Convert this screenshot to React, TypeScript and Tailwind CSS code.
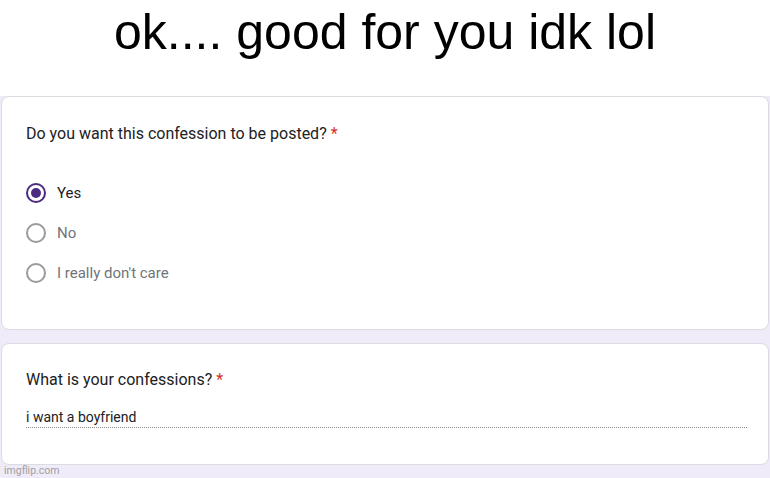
import React from "react";

function Radio({ checked }: { checked?: boolean }) {
  return checked ? (
    <span className="flex h-[20px] w-[20px] items-center justify-center rounded-full border-2 border-[#4b2a80]">
      <span className="h-[10px] w-[10px] rounded-full bg-[#4b2a80]" />
    </span>
  ) : (
    <span className="h-[20px] w-[20px] rounded-full border-2 border-[#9a9a9a]" />
  );
}

export default function App() {
  const opts = [
    { label: "Yes", checked: true },
    { label: "No" },
    { label: "I really don't care" },
  ];
  return (
    <div className="flex h-[478px] w-[770px] flex-col overflow-hidden bg-[#f0ebf8]" style={{ fontFamily: "Roboto, 'Liberation Sans', sans-serif" }}>
      <div className="flex h-[96px] shrink-0 items-start justify-center bg-white pt-[3px]">
        <div className="text-[50px] leading-[58px] text-black" style={{ fontFamily: "'Liberation Sans', Arial, sans-serif" }}>
          ok.... good for you idk lol
        </div>
      </div>
      <div className="mx-[1px] h-[234px] shrink-0 rounded-[8px] border border-[#dadce0] bg-white px-[24px] pt-[27px]">
        <div className="text-[16px] leading-[20px] text-[#202124]">
          Do you want this confession to be posted? <span className="text-[#d93025]">*</span>
        </div>
        <div className="mt-[39px] flex flex-col gap-[20px]">
          {opts.map((o) => (
            <div key={o.label} className="flex h-[20px] items-center gap-[11px]">
              <Radio checked={o.checked} />
              <span className={"text-[15px] leading-[20px] " + (o.checked ? "text-[#202124]" : "text-[#70757a]")}>{o.label}</span>
            </div>
          ))}
        </div>
      </div>
      <div className="mx-[1px] mt-[13px] h-[122px] shrink-0 rounded-[8px] border border-[#dadce0] bg-white px-[24px] pt-[26px]">
        <div className="text-[16px] leading-[20px] text-[#202124]">
          What is your confessions? <span className="text-[#d93025]">*</span>
        </div>
        <div className="mt-[19px] w-[721px] border-b border-dotted border-[#8a8a8a] pb-[1px] text-[14px] leading-[17px] text-[#202124]">
          i want a boyfriend
        </div>
      </div>
      <div className="pl-[4px] text-[10.5px] leading-[12px] text-[#a0a0a0]">imgflip.com</div>
    </div>
  );
}
